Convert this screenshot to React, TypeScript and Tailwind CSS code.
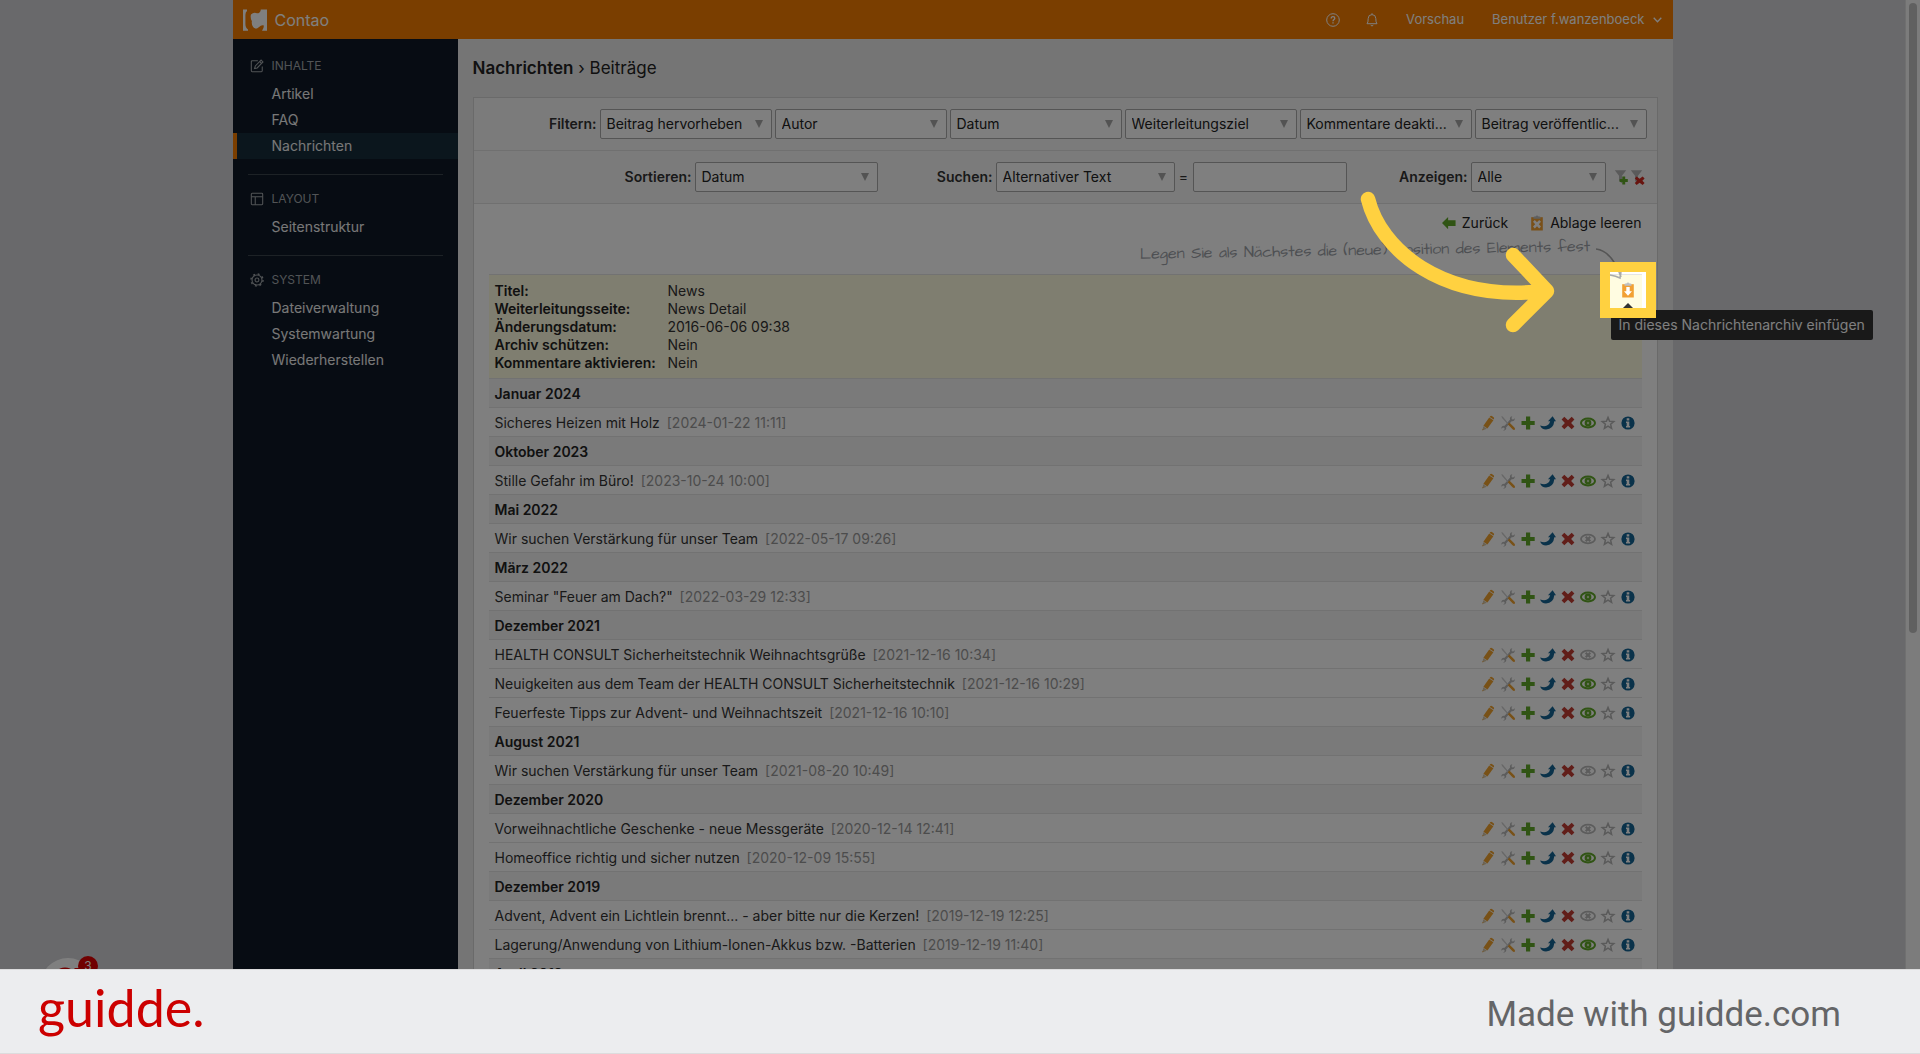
import React from 'react';

type Entry = { title: string; date: string; published: boolean };

const navigation = [
    { label: 'INHALTE', icon: 'edit', items: ['Artikel', 'FAQ', 'Nachrichten'] },
    { label: 'LAYOUT', icon: 'layout', items: ['Seitenstruktur'] },
    { label: 'SYSTEM', icon: 'gear', items: ['Dateiverwaltung', 'Systemwartung', 'Wiederherstellen'] },
];

const filters = ['Beitrag hervorheben', 'Autor', 'Datum', 'Weiterleitungsziel', 'Kommentare deakti...', 'Beitrag veröffentlic...'];

const archive = [
    ['Titel:', 'News'],
    ['Weiterleitungsseite:', 'News Detail'],
    ['Änderungsdatum:', '2016-06-06 09:38'],
    ['Archiv schützen:', 'Nein'],
    ['Kommentare aktivieren:', 'Nein'],
];

const months: { name: string; entries: Entry[] }[] = [
    { name: 'Januar 2024', entries: [{ title: 'Sicheres Heizen mit Holz', date: '2024-01-22 11:11', published: true }] },
    { name: 'Oktober 2023', entries: [{ title: 'Stille Gefahr im Büro!', date: '2023-10-24 10:00', published: true }] },
    { name: 'Mai 2022', entries: [{ title: 'Wir suchen Verstärkung für unser Team', date: '2022-05-17 09:26', published: false }] },
    { name: 'März 2022', entries: [{ title: 'Seminar "Feuer am Dach?"', date: '2022-03-29 12:33', published: true }] },
    {
        name: 'Dezember 2021',
        entries: [
            { title: 'HEALTH CONSULT Sicherheitstechnik Weihnachtsgrüße', date: '2021-12-16 10:34', published: false },
            { title: 'Neuigkeiten aus dem Team der HEALTH CONSULT Sicherheitstechnik', date: '2021-12-16 10:29', published: true },
            { title: 'Feuerfeste Tipps zur Advent- und Weihnachtszeit', date: '2021-12-16 10:10', published: true },
        ],
    },
    { name: 'August 2021', entries: [{ title: 'Wir suchen Verstärkung für unser Team', date: '2021-08-20 10:49', published: false }] },
    {
        name: 'Dezember 2020',
        entries: [
            { title: 'Vorweihnachtliche Geschenke - neue Messgeräte', date: '2020-12-14 12:41', published: false },
            { title: 'Homeoffice richtig und sicher nutzen', date: '2020-12-09 15:55', published: true },
        ],
    },
    {
        name: 'Dezember 2019',
        entries: [
            { title: 'Advent, Advent ein Lichtlein brennt... - aber bitte nur die Kerzen!', date: '2019-12-19 12:25', published: false },
            { title: 'Lagerung/Anwendung von Lithium-Ionen-Akkus bzw. -Batterien', date: '2019-12-19 11:40', published: true },
        ],
    },
    { name: 'April 2019', entries: [] },
];

const Svg = ({ size = 'size-4', children }: { size?: string; children: React.ReactNode }) => (
    <svg className={`${size} shrink-0`} viewBox="0 0 16 16" fill="none" aria-hidden="true">{children}</svg>
);

const PencilIcon = () => (
    <Svg>
        <path d="M9.2 2.6 13.4 5.2 7.4 13.4 3.4 10.8z" fill="#f0a22e" />
        <path d="m9.700 1.900.4-.6q.8-.8 1.800-.2l1.700 1.100q.9.700.4 1.600l-.3.600z" fill="#f0a22e" />
        <path d="M3.200 11.300 6.900 13.700 3 15.300q-.6.2-.5-.4z" fill="#d8c7a6" />
        <path d="m2.600 13.900 1 .9-.9.500q-.4 0-.3-.5z" fill="#f0a22e" />
    </Svg>
);

const ToolsIcon = () => (
    <Svg>
        <path d="M12.300 1.200q-2.200.2-2.400 2.100 0 .7.2 1.100L4.600 10.700q-2.200-.2-3 1.400-.4.900-.1 1.700l1.500-1.300 1.400.4.300 1.400-1.400 1.300q1.600.2 2.500-1 .7-1 .3-2.200l5.500-6.100q1.900.3 2.800-1.100.5-.9.300-2l-1.500 1.400-1.300-.4-.4-1.300z" fill="#b9b9b9" />
        <path d="m1.300 1.100 1.400.500 6 7.200-.8.800L2 3z" fill="#cfcfcf" />
        <path d="m7.700 9.300 1.700-1.700 5.200 5.200q.8 1.200.1 1.900t-1.900-.1z" fill="#f0a22e" />
    </Svg>
);

const PlusIcon = () => (
    <Svg><path d="M6 1.500h4.200v4.400h4.500v4.200h-4.500v4.500H6v-4.500H1.500V5.900H6z" fill="#61a828" /></Svg>
);

const MoveIcon = () => (
    <Svg>
        <path d="M12.600 1.200 16 6.300h-1.700Q13.500 14 6 14.500 1.600 14.500.1 10.400q4.200 1.600 6.900.1 2.800-1.500 3.200-4.200H8z" fill="#146595" />
    </Svg>
);

const DeleteIcon = () => (
    <Svg><path d="M4.300 1.800 8 5.300l3.700-3.500 2.700 2.800L11.100 8l3.300 3.500-2.700 2.700L8 10.800l-3.700 3.400-2.700-2.700L4.900 8 1.600 4.600z" fill="#c33c32" /></Svg>
);

const EyeIcon = ({ published }: { published: boolean }) => published ? (
    <Svg>
        <ellipse cx="8" cy="8" rx="7" ry="4.400" stroke="#61a828" strokeWidth="2" />
        <circle cx="8" cy="8" r="3.400" fill="#61a828" />
        <circle cx="8" cy="8" r="1.200" fill="#c9e3b1" />
    </Svg>
) : (
    <Svg>
        <ellipse cx="8" cy="8" rx="7" ry="4.400" stroke="#b9b9b9" strokeWidth="1.800" />
        <path d="m5.700 5.700 4.600 4.600m0-4.600-4.600 4.600" stroke="#b9b9b9" strokeWidth="2.200" />
    </Svg>
);

const StarIcon = () => (
    <Svg><path d="m8 2.400 1.600 3.900 4.200.3-3.200 2.700 1 4.100L8 11.200l-3.600 2.200 1-4.100-3.200-2.700 4.200-.3z" stroke="#b4b4b4" strokeWidth="1.500" /></Svg>
);

const InfoIcon = () => (
    <Svg>
        <circle cx="8" cy="8" r="6.600" fill="#146595" />
        <path d="M6.700 3.200h2.600v2.300H6.700zM6 6.500h3.300v4.600h.8v1.500H6v-1.500h.7V8H6z" fill="#fff" />
    </Svg>
);

const ClipboardIcon = ({ children }: { children: React.ReactNode }) => (
    <Svg>
        <path d="M2.200 2.200h11.600v13.300H2.200z" fill="#f2a033" />
        <path d="M4.500 3.800V2.200q0-.8 1-.8h1Q7 .4 8 .4t1.500 1h1q1 0 1 .8v1.600z" fill="#bfc0c3" />
        {children}
    </Svg>
);

const FunnelIcon = ({ children }: { children: React.ReactNode }) => (
    <Svg>
        <path d="M.8 1.300h11.400L8 6.800v7.500L5 12V6.800z" fill="#b4b4b4" />
        {children}
    </Svg>
);

const NavIcon = ({ name }: { name: string }) => (
    <svg className="size-[14px] shrink-0" viewBox="0 0 16 16" fill="none" stroke="currentColor" strokeWidth="1.200" aria-hidden="true">
        {name === 'edit' && (
            <>
                <path d="M9 2H2.500q-1 0-1 1v10.500q0 1 1 1H13q1 0 1-1V8.500" />
                <path d="m12.700 1.200 2.100 2.100-6.600 6.900-3 .8.900-3z" />
                <path d="m11.200 3 1.900 1.900" />
            </>
        )}
        {name === 'layout' && (
            <>
                <rect x="1.500" y="1.500" width="13" height="13" rx="1" />
                <path d="M1.500 5.500h13M6 5.500v9" />
            </>
        )}
        {name === 'gear' && (
            <>
                <circle cx="8" cy="8" r="5.700" />
                <circle cx="8" cy="8" r="2.200" />
                <circle cx="8" cy="8" r="6.900" strokeDasharray="2.200 3.220" strokeWidth="1.600" />
            </>
        )}
    </svg>
);

const Select = ({ id, value, width, label }: { id: string; value: string; width: string; label?: string }) => (
    <span className={`relative inline-flex shrink-0 ${width}`}>
        <select id={id} aria-label={label} className="h-[30px] w-full appearance-none rounded-xs border border-[#aaa] bg-white pl-[6px] text-[#222]">
            <option>{value}</option>
        </select>
        <svg className="pointer-events-none absolute right-[9px] top-[11px] size-2" viewBox="0 0 8 8" aria-hidden="true">
            <path d="M0 0h8L4 8z" fill="#a6a6a6" />
        </svg>
    </span>
);

const EntryRow = ({ entry }: { entry: Entry }) => (
    <li className="flex h-[29px] items-center justify-between border-b border-[#e5e5e5] px-1.5 pt-px">
        <div>
            {entry.title} <span className="pl-[3px] text-[#999]">[{entry.date}]</span>
        </div>
        <div className="flex gap-1">
            <button aria-label="Bearbeiten"><PencilIcon /></button>
            <button aria-label="Einstellungen"><ToolsIcon /></button>
            <button aria-label="Duplizieren"><PlusIcon /></button>
            <button aria-label="Verschieben"><MoveIcon /></button>
            <button aria-label="Löschen"><DeleteIcon /></button>
            <button aria-label="Veröffentlichen"><EyeIcon published={entry.published} /></button>
            <button aria-label="Hervorheben"><StarIcon /></button>
            <button aria-label="Details"><InfoIcon /></button>
        </div>
    </li>
);

const Header = () => (
    <header className="flex h-10 items-center justify-between bg-[#f47c00] pl-[10px] pr-[11px] text-[13px] text-white">
        <a href="#" className="flex items-center gap-2 text-base">
            <svg className="h-6 w-6" viewBox="0 0 24 24" fill="#fff" aria-hidden="true">
                <path d="M0 1.500h4v1.400Q2.400 4 2.400 7v9q0 4 2.600 5.400v1.300H0z" />
                <path d="M8 6.500q2.200-2.300 5-1.600 1.500.8 3 0 2-1.200 1.700-3.400H24v21.200h-5q1.800-1.800 1.900-5.200-1.500-.8-3.200.2-1.300 1.300-3.700 2.700-3 .6-4-1.700Q8.300 16 8.900 13.200 7 9.600 8 6.500z" />
            </svg>
            Contao
        </a>
        <nav className="flex items-center">
            <button aria-label="Hilfe" className="mr-[25px]">
                <svg className="size-3.5" viewBox="0 0 14 14" fill="none" stroke="#fff" strokeWidth="1" aria-hidden="true">
                    <circle cx="7" cy="7" r="6.300" />
                    <path d="M5.200 5.600q0-1.900 1.800-1.900t1.800 1.600q0 .8-.9 1.300T7 8.200M7 9.200v1.300" strokeWidth="1.300" />
                </svg>
            </button>
            <button aria-label="Benachrichtigungen" className="mr-[27px]">
                <svg className="size-3.5" viewBox="0 0 14 14" fill="none" stroke="#fff" strokeWidth="1" aria-hidden="true">
                    <path d="M7 .2v1.300M2 10.700Q3.200 9.700 3.200 5.500q0-3.900 3.800-3.900t3.800 3.900q0 4.200 1.200 5.200zM5.700 12.200q1.300 1.600 2.600 0" />
                </svg>
            </button>
            <a href="#" className="mr-7">Vorschau</a>
            <button className="flex items-center gap-2">
                Benutzer f.wanzenboeck
                <svg className="h-1.5 w-[9px]" viewBox="0 0 9 6" fill="none" stroke="#fff" strokeWidth="1.300" aria-hidden="true"><path d="m.7.8 3.800 4L8.300.8" /></svg>
            </button>
        </nav>
    </header>
);

const Sidebar = () => (
    <nav className="w-[225px] shrink-0 bg-[#0f1926] pt-3 text-[#f0f0f0]">
        {navigation.map((group, i) => (
            <div key={group.label}>
                {i > 0 && <hr className="mx-[15px] mb-[9px] mt-[15px] border-[#3a454d]" />}
                <div className="flex h-[30px] items-center gap-2 pl-[17px] text-xs text-[#a3a8ac]">
                    <NavIcon name={group.icon} />
                    {group.label}
                </div>
                <ul>
                    {group.items.map(item => (
                        <li key={item}>
                            <a
                                href="#"
                                className={`flex h-[26px] items-center border-l-4 pl-[35px] ${item === 'Nachrichten' ? 'border-[#f47c00] bg-[#172c3a]' : 'border-transparent'}`}
                            >
                                {item}
                            </a>
                        </li>
                    ))}
                </ul>
            </div>
        ))}
    </nav>
);

const FilterPanel = () => (
    <form className="bg-[#f7f7f7]" onSubmit={e => e.preventDefault()}>
        <div className="flex items-center justify-end gap-[3px] border-b border-[#e0e0e0] py-[11px] pr-[10px]">
            <label htmlFor="filter-0" className="font-semibold">Filtern:</label>
            {filters.map((name, i) => <Select key={name} id={`filter-${i}`} value={name} label={i > 0 ? name : undefined} width="w-[172px]" />)}
        </div>
        <div className="flex items-center justify-end border-b border-[#e0e0e0] py-[11px] pr-[11px]">
            <label htmlFor="sort" className="pr-[3px] font-semibold">Sortieren:</label>
            <Select id="sort" value="Datum" width="w-[183px]" />
            <label htmlFor="search-field" className="w-[118px] pr-[3px] text-right font-semibold">Suchen:</label>
            <Select id="search-field" value="Alternativer Text" width="w-[179px]" />
            <span className="w-[18px] text-center">=</span>
            <input aria-label="Suchbegriff" className="h-[30px] w-[154px] rounded-xs border border-[#aaa] bg-white px-1.5" />
            <label htmlFor="limit" className="w-[124px] pr-[3px] text-right font-semibold">Anzeigen:</label>
            <Select id="limit" value="Alle" width="w-[135px]" />
            <button aria-label="Filter anwenden" className="ml-2">
                <FunnelIcon><path d="M8.300 7.500h2.900v2.600h2.600v2.900h-2.600v2.600H8.300V13H5.700v-2.900h2.600z" fill="#61a828" /></FunnelIcon>
            </button>
            <button aria-label="Filter zurücksetzen">
                <FunnelIcon><path d="m6.600 7.600 3 2.200 3-2.200 2 1.900-2.200 2.300 2.200 2.300-2 1.800-3-2.200-3 2.200-1.800-1.800L7 11.800 4.800 9.500z" fill="#d0281e" /></FunnelIcon>
            </button>
        </div>
    </form>
);

// The highlight frame darkens everything around it with its spread shadow
const PasteTarget = () => (
    <div className="relative size-4">
        <svg className="absolute -left-6 -top-[34px] h-8 w-7" viewBox="0 0 28 32" fill="none" stroke="#aaa" strokeWidth="1.600" aria-hidden="true">
            <path d="M0 1Q16 3 25 29M14 27q6 1 10 3 1-5 1-8" />
        </svg>
        <button aria-label="In dieses Nachrichtenarchiv einfügen" className="block">
            <ClipboardIcon><path d="M6.300 5h3.400v4.300H12l-4 4.500-4-4.500h2.300z" fill="#fff" /></ClipboardIcon>
        </button>
        <div role="tooltip" className="absolute -left-[9px] top-7 z-30 flex h-[30px] items-center whitespace-nowrap rounded-xs bg-[#333] px-2 text-white">
            In dieses Nachrichtenarchiv einfügen
        </div>
        <svg className="absolute left-0 top-[21px] z-30 h-2 w-4" viewBox="0 0 16 8" aria-hidden="true"><path d="m8 0 8 8H0z" fill="#333" /></svg>
        <div className="pointer-events-none absolute -inset-5 z-40 border-10 border-[#ffd140] shadow-[0_0_0_2500px_rgba(0,0,0,0.5)]" />
        <svg className="pointer-events-none absolute -left-[262px] -top-[100px] z-50 h-[154px] w-[200px]" viewBox="0 0 200 154" fill="none" stroke="#ffd140" strokeWidth="14.500" strokeLinecap="round" strokeLinejoin="round" aria-hidden="true">
            <path d="M10 17C22 66 82 121 188 109M155 73l34 36-34 34" />
        </svg>
    </div>
);

const News = () => (
    <main className="min-w-0 grow bg-[#ebebeb] px-[15px] pt-[15px]">
        <h1 className="mb-[15px] text-[17px] leading-7 text-[#222]">
            <span className="font-semibold">Nachrichten</span> › Beiträge
        </h1>
        <div className="border border-[#d5d5d5] bg-white text-[#333]">
            <FilterPanel />
            <div className="flex h-7 items-end justify-end gap-[21px] pr-[15px] leading-[18px]">
                <a href="#" className="flex items-center gap-1.5 text-[#222]">
                    <Svg size="size-[14px]"><path d="M0 8 7 1v3.800h8.500v6.500H7V15z" fill="#61a828" /></Svg>
                    Zurück
                </a>
                <a href="#" className="flex items-center gap-[5px] text-[#222]">
                    <ClipboardIcon><path d="m5.800 5 2.200 2.200L10.200 5 12 6.800 9.800 9.200l2.200 2.400-1.800 1.800L8 11.200l-2.200 2.200L4 11.600l2.200-2.400L4 6.800z" fill="#fff" /></ClipboardIcon>
                    Ablage leeren
                </a>
            </div>
            <p className="mb-3 mt-1.5 flex h-6 items-center justify-end pr-[66px] text-base text-[#9ca1a7]">
                <span className="-rotate-1 [font-family:'Architects_Daughter','Lato',cursive]">Legen Sie als Nächstes die (neue) Position des Elements fest</span>
            </p>
            <div className="mx-[15px] border-t border-[#e5e5e5]">
                <div className="flex items-start justify-between border-b border-[#e5e5e5] bg-[#fffce1] px-1.5 pb-1.5 pt-[7px]">
                    <table className="leading-[18px]">
                        <tbody>
                            {archive.map(([label, value]) => (
                                <tr key={label}>
                                    <th scope="row" className="w-[173px] text-left font-semibold text-[#222]">{label}</th>
                                    <td>{value}</td>
                                </tr>
                            ))}
                        </tbody>
                    </table>
                    <PasteTarget />
                </div>
                {months.map(month => (
                    <section key={month.name}>
                        <h2 className="flex h-[29px] items-center border-b border-[#e5e5e5] bg-[#f4f4f4] px-1.5 pt-px font-semibold text-[#222]">{month.name}</h2>
                        <ul>{month.entries.map(entry => <EntryRow key={entry.date} entry={entry} />)}</ul>
                    </section>
                ))}
            </div>
        </div>
    </main>
);

const Footer = () => (
    <footer className="relative z-60 flex h-[85px] shrink-0 items-center justify-between border-y border-[#dcdcdd] bg-[#ecedef] pl-[38px] pr-[79px]">
        <a href="#" className="pb-2 font-['Lato'] text-[52px] text-[#cc0000]">guidde.</a>
        <p className="pt-1.5 font-['Roboto'] text-[35px] text-[#646567]">Made with guidde.com</p>
    </footer>
);

export default function App() {
    return (
        <div className="flex h-screen flex-col overflow-hidden bg-[#d2d2d6] font-['Inter','Liberation_Sans',sans-serif] text-sm">
            <div className="flex min-h-0 grow">
                <div className="relative flex min-w-0 grow justify-center">
                    <div className="flex w-full max-w-[1440px] flex-col">
                        <Header />
                        <div className="flex min-h-0 grow">
                            <Sidebar />
                            <News />
                        </div>
                    </div>
                    <button aria-label="guidde" className="absolute -bottom-[45px] left-10 size-14 rounded-full bg-white shadow-lg">
                        <svg className="size-14" viewBox="0 0 56 56" fill="none" stroke="#e00000" strokeWidth="5" aria-hidden="true">
                            <circle cx="25" cy="22" r="10" />
                            <path d="M37 10v20" />
                        </svg>
                        <span className="absolute -right-0.5 -top-0.5 flex size-5 items-center justify-center rounded-full bg-[#e00000] text-xs text-white">3</span>
                    </button>
                </div>
                <div className="w-[15px] shrink-0 border-l border-[#e0e0e0] bg-[#f8f8f8] px-[3px] pt-[3px]">
                    <div className="h-[630px] rounded-full bg-[#c1c1c1]" />
                </div>
            </div>
            <Footer />
        </div>
    );
}
